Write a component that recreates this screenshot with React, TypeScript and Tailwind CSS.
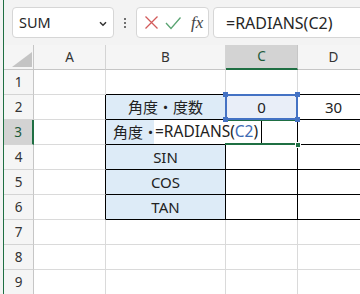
import React from 'react';

const cols = ['A', 'B', 'C', 'D'];

type CellSpec = { text?: string; fill?: string; black?: boolean; align?: string };

// rows 1..9, cells A..D
const rows: CellSpec[][] = Array.from({ length: 9 }, (_, i) => {
  const r = i + 1;
  const inTable = r >= 2 && r <= 6;
  // B3 is mostly hidden under the in-cell editor, only its start shows
  const label: Record<number, string> = { 2: '角度・度数', 3: '角度・', 4: 'SIN', 5: 'COS', 6: 'TAN' };
  return [
    {},
    {
      text: label[r],
      fill: inTable ? 'bg-[#ddebf7]' : undefined,
      black: inTable,
      align: r === 3 ? 'justify-start pl-[7px]' : undefined,
    },
    { text: r === 2 ? '0' : undefined, fill: r === 2 ? 'bg-[#e9eef8]' : undefined, black: inTable },
    { text: r === 2 ? '30' : undefined, black: inTable },
  ];
});

const App: React.FC = () => {
  return (
    <div className="w-[360px] h-[294px] overflow-hidden bg-[#f3f3f3] flex" style={{ fontFamily: '"Noto Sans", "Noto Sans CJK JP", sans-serif' }}>
      <div className="w-[3px] shrink-0" />
      <div className="flex-1 min-w-0 border-l border-[#1f6f43] flex flex-col">
        {/* formula bar */}
        <div className="h-[45px] shrink-0 flex items-start pt-[7px] pl-[8px]">
          <div className="w-[102px] h-[31px] shrink-0 bg-white border border-[#d6d6d6] rounded-[4px] flex items-center pl-[6px] pr-[6px]">
            <span className="text-[14.5px] text-[#262626] flex-1">SUM</span>
            <svg width="8" height="6" viewBox="0 0 8 6" className="mt-[2px]">
              <path d="M1 1.2 L4 4.2 L7 1.2" fill="none" stroke="#333" strokeWidth="1.5" />
            </svg>
          </div>
          <div className="w-[22px] h-[31px] shrink-0 flex flex-col items-center justify-center gap-[2px]">
            <span className="w-[2px] h-[2px] bg-[#444] rounded-full" />
            <span className="w-[2px] h-[2px] bg-[#444] rounded-full" />
            <span className="w-[2px] h-[2px] bg-[#444] rounded-full" />
          </div>
          <div className="w-[73px] h-[31px] shrink-0 bg-white border border-[#d6d6d6] rounded-[4px] flex items-center pl-[7px] gap-[6px]">
            <svg width="15" height="15" viewBox="0 0 15 15">
              <path d="M1.5 1.5 L13.5 13.5 M13.5 1.5 L1.5 13.5" stroke="#d25b5b" strokeWidth="1.3" fill="none" />
            </svg>
            <svg width="16" height="14" viewBox="0 0 16 14">
              <path d="M1 7 L6 12.5 L15.5 1.5" stroke="#5aa472" strokeWidth="1.3" fill="none" />
            </svg>
            <span className="text-[17px] italic text-[#444] leading-none ml-[4px]" style={{ fontFamily: '"Liberation Serif", serif' }}>fx</span>
          </div>
          <div className="flex-1 h-[31px] ml-[4px] -mr-[6px] bg-white border border-[#d6d6d6] rounded-l-[4px] flex items-center pl-[12px]">
            <span className="text-[16px] text-[#262626]">=RADIANS(C2)</span>
          </div>
        </div>

        {/* sheet */}
        <div className="relative flex-1">
          <div className="grid grid-cols-[30px_72px_120px_72px_72px] grid-rows-[repeat(10,25px)] bg-white">
            {/* header row */}
            <div className="bg-[#f5f5f5] border-r border-b border-[#c6c6c6] relative">
              <svg width="20" height="15" viewBox="0 0 20 15" className="absolute left-[8px] top-[7px]">
                <path d="M0 15 L20 15 L20 0 Z" fill="#c4c4c4" />
              </svg>
            </div>
            {cols.map((c) => (
              <div
                key={c}
                className={
                  c === 'C'
                    ? 'bg-[#d3d3d3] border-r border-[#c6c6c6] border-b-2 border-b-[#1f6f43] flex items-center justify-center text-[13.5px] text-[#1d5a3a]'
                    : 'bg-[#f5f5f5] border-r border-b border-[#d4d4d4] border-b-[#c6c6c6] flex items-center justify-center text-[13.5px] text-[#333]'
                }
              >
                {c}
              </div>
            ))}
            {rows.map((cells, i) => {
              const r = i + 1;
              return (
                <React.Fragment key={r}>
                  <div
                    className={
                      r === 3
                        ? 'bg-[#d3d3d3] border-b border-[#d4d4d4] border-r-2 border-r-[#1f6f43] flex items-center justify-center text-[13.5px] text-[#1d5a3a]'
                        : 'bg-[#f5f5f5] border-b border-r border-[#d4d4d4] border-r-[#c6c6c6] flex items-center justify-center text-[13.5px] text-[#333]'
                    }
                  >
                    {r}
                  </div>
                  {cells.map((cell, j) => {
                    const rightBlack = cell.black || (j === 0 && r >= 2 && r <= 6);
                    const bottomBlack = cell.black || (j > 0 && r === 1);
                    return (
                      <div
                        key={j}
                        className={`border-r border-b flex items-center whitespace-nowrap overflow-hidden text-[15px] text-[#222] ${cell.align ?? 'justify-center'} ${cell.fill ?? ''} ${rightBlack ? 'border-r-black' : 'border-r-[#dadada]'} ${bottomBlack ? 'border-b-black' : 'border-b-[#dadada]'}`}
                      >
                        {cell.text}
                      </div>
                    );
                  })}
                </React.Fragment>
              );
            })}
          </div>

          {/* in-cell editor over B3:C3 */}
          <div className="absolute left-[150px] top-[75px] w-[143px] h-[24px] bg-white flex items-center pl-[1px]">
            <span className="text-[15.5px] text-[#222] whitespace-nowrap">
              =RADIANS(<span className="text-[#3d6ab3]">C2</span>)
            </span>
          </div>
          <div className="absolute left-[257px] top-[76px] w-[1px] h-[22px] bg-black" />

          {/* active cell C3 */}
          <div className="absolute left-[221px] top-[74px] w-[75px] h-[26px] border-t-2 border-b-2 border-[#1f6f43]" />
          <div className="absolute left-[291px] top-[97px] w-[6px] h-[6px] bg-[#1f6f43] border border-white" />

          {/* referenced range C2 */}
          <div className="absolute left-[221px] top-[49px] w-[73px] h-[26px] border-2 border-[#4472c4]" />
          <div className="absolute left-[219px] top-[47px] w-[5px] h-[5px] bg-[#4472c4]" />
          <div className="absolute left-[291px] top-[47px] w-[5px] h-[5px] bg-[#4472c4]" />
          <div className="absolute left-[219px] top-[72px] w-[5px] h-[5px] bg-[#4472c4]" />
          <div className="absolute left-[291px] top-[72px] w-[5px] h-[5px] bg-[#4472c4]" />
        </div>
      </div>
    </div>
  );
};

export default App;
